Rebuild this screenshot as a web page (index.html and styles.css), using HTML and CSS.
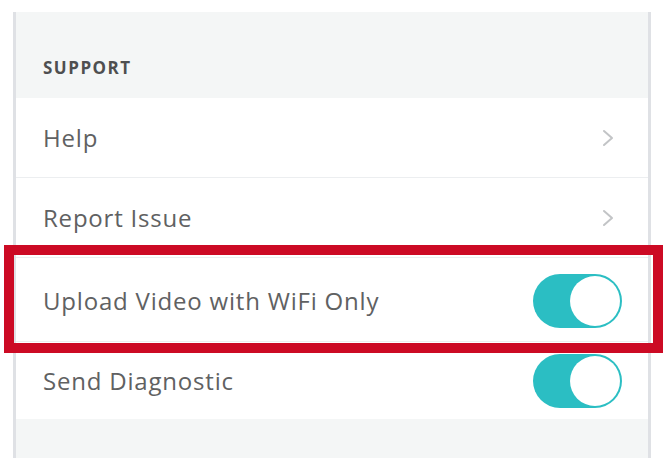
FILE: index.html
```html
<!DOCTYPE html>
<html>

<head>
  <meta charset="utf-8">
  <meta name="viewport" content="width=device-width, initial-scale=1">
  <title>Settings - Support</title>
  <link rel="stylesheet" href="styles.css">
</head>
<body>
  <section class="panel">
    <header class="panel-head">
      <h3>SUPPORT</h3>
    </header>
    <div class="row">
      <span class="label">Help</span>
      <svg class="chevron" width="12" height="18" viewBox="0 0 12 18">
        <polyline points="2,2 10,9 2,16" fill="none" stroke="#c2c4c6" stroke-width="2" stroke-linecap="round" stroke-linejoin="round" />
      </svg>
    </div>
    <div class="row">
      <span class="label">Report Issue</span>
      <svg class="chevron" width="12" height="18" viewBox="0 0 12 18">
        <polyline points="2,2 10,9 2,16" fill="none" stroke="#c2c4c6" stroke-width="2" stroke-linecap="round" stroke-linejoin="round" />
      </svg>
    </div>
    <div class="row row-tall">
      <span class="label">Upload Video with WiFi Only</span>
      <span class="toggle on"><span class="knob"></span></span>
    </div>
    <div class="row row-short">
      <span class="label">Send Diagnostic</span>
      <span class="toggle on"><span class="knob"></span></span>
    </div>
    <footer class="panel-foot"></footer>
  </section>
  <div class="highlight"></div>
</body>
</html>
```

FILE: styles.css
```css
body {
  margin: 0;
  background: #fff;
  font-family: "Open Sans", Lato, sans-serif;
  position: relative;
}

.panel {
  margin: 12px 17px 13px 13px;
  border-left: 3px solid #dfe1e5;
  border-right: 3px solid #dfe1e5;
  background: #fff;
}

.panel-head {
  height: 86px;
  background: #f4f6f6;
  display: flex;
  align-items: flex-end;
  padding: 0 27px;
  box-sizing: border-box;
}

.panel-head h3 {
  margin: 0 0 19px;
  font-size: 17px;
  font-weight: 700;
  color: #4e4f50;
  letter-spacing: 1.5px;
}

.row {
  height: 80px;
  box-sizing: border-box;
  border-bottom: 1px solid #eceef0;
  display: flex;
  align-items: center;
  justify-content: space-between;
  padding: 0 26px 0 27px;
}

.row-tall {
  height: 84px;
  padding-top: 2px;
}

.row-short {
  height: 77px;
  border-bottom: none;
}

.label {
  font-size: 24px;
  letter-spacing: 0.8px;
  color: #606162;
}

.chevron {
  margin-right: 8px;
}

.toggle {
  width: 89px;
  height: 54px;
  border-radius: 27px;
  background: #d8dadc;
  display: flex;
  align-items: center;
  padding: 2px;
  box-sizing: border-box;
}

.toggle.on {
  background: #2bbec3;
  justify-content: flex-end;
}

.knob {
  width: 50px;
  height: 50px;
  border-radius: 50%;
  background: #fff;
}

.panel-foot {
  height: 39px;
  background: #f4f6f6;
}

/* annotation frame drawn over the wifi row */
.highlight {
  position: absolute;
  left: 4px;
  top: 245px;
  width: 659px;
  height: 108px;
  border: 10px solid #cc0a24;
  box-sizing: border-box;
}
```
